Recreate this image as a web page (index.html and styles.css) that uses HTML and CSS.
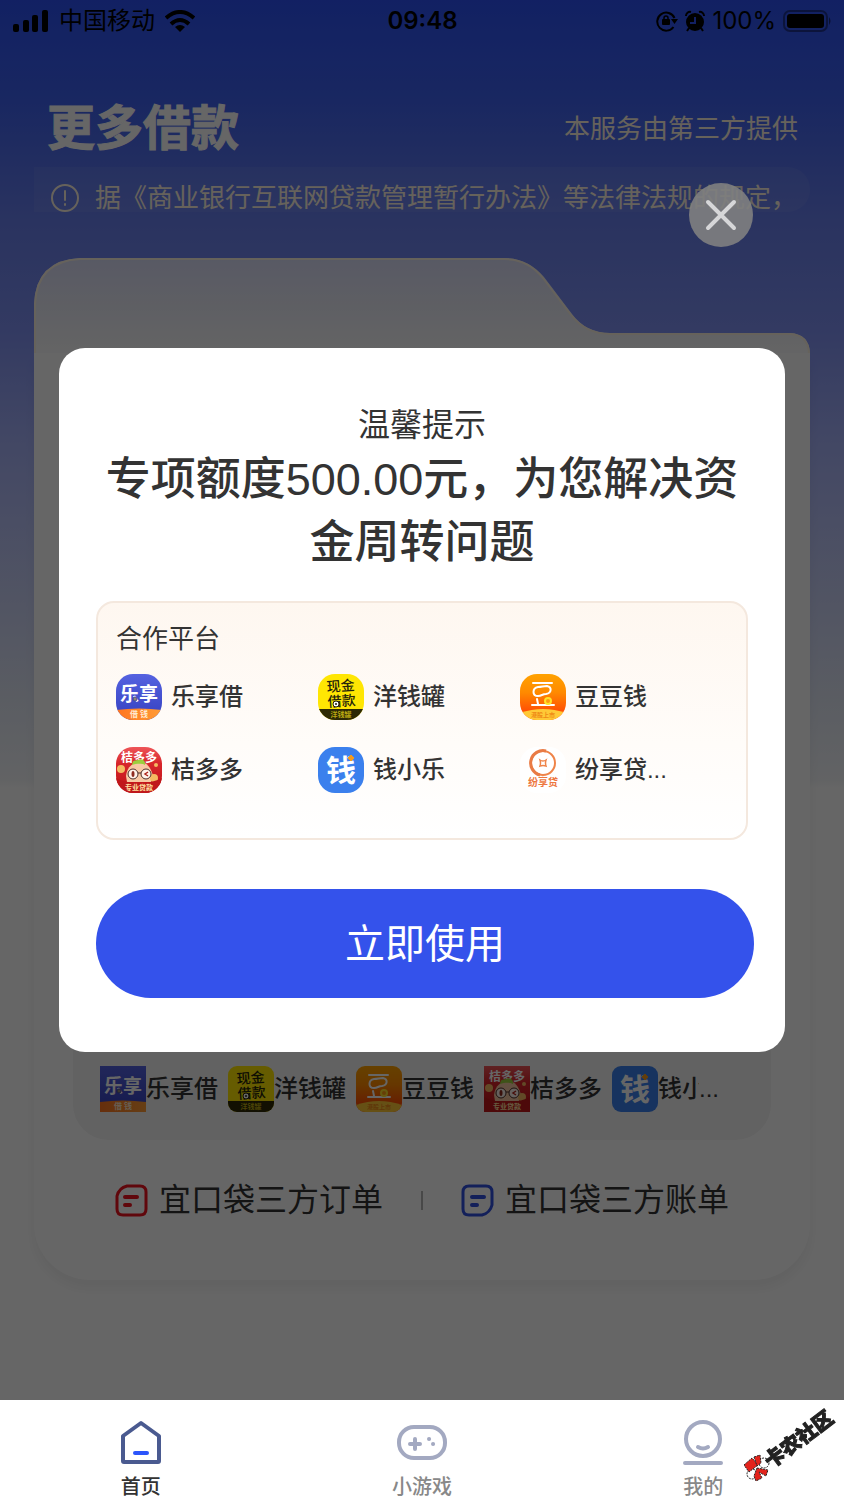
FILE: index.html
```html
<!DOCTYPE html>
<html lang="zh-CN">
<head>
<meta charset="UTF-8" />
<meta name="viewport" content="width=device-width, initial-scale=1" />
<title>更多借款</title>
<link rel="stylesheet" href="styles.css">
</head>
<body>

<div class="page">
  <div class="status-bar">
    <div class="status-left">
      <svg width="36" height="22" viewBox="0 0 36 22">
        <rect x="0" y="14" width="6" height="8" rx="2"/>
        <rect x="10" y="10" width="6" height="12" rx="2"/>
        <rect x="19" y="5" width="6" height="17" rx="2"/>
        <rect x="29" y="0" width="6" height="22" rx="2"/>
      </svg>
      <span>中国移动</span>
      <svg width="30" height="22" viewBox="0 0 30 22">
        <g fill="none" stroke="#000" stroke-width="4">
          <path d="M1 8Q15 -4 29 8"/>
          <path d="M6 14Q15 6 24 14"/>
        </g>
        <path d="M10 17Q15 13 20 17L15 22Z"/>
      </svg>
    </div>
    <strong>09:48</strong>
    <div class="status-right">
      <svg width="22" height="22" viewBox="0 0 22 22">
        <path d="M17.500 17A9 9 0 1 1 18.500 8" fill="none" stroke="#000" stroke-width="2"/>
        <path d="M15 9H22L18.500 14Z"/>
        <rect x="6" y="9" width="8" height="6" rx="1"/>
        <path d="M8 10V8A2 2 0 0 1 12 8V10" fill="none" stroke="#000" stroke-width="1.500"/>
      </svg>
      <svg width="20" height="22" viewBox="0 0 20 22">
        <circle cx="10" cy="12" r="9"/>
        <path d="M1 6A4 4 0 0 1 6 2M14 2A4 4 0 0 1 19 6M4 18L2 21M16 18L18 21" fill="none" stroke="#000" stroke-width="2"/>
        <path d="M10 7V13H5" fill="none" stroke="#2d52f7" stroke-width="2"/>
      </svg>
      <span>100%</span>
      <svg width="49" height="24" viewBox="0 0 49 24">
        <rect x="1" y="2" width="43" height="20" rx="6" fill="none" stroke="#000" stroke-opacity="0.4" stroke-width="2"/>
        <rect x="4" y="5" width="37" height="14" rx="3"/>
        <path d="M46 8Q49 12 46 16Z" fill-opacity="0.5"/>
      </svg>
    </div>
  </div>

  <header>
    <h1>更多借款</h1>
    <span>本服务由第三方提供</span>
  </header>

  <div class="notice">
    <svg width="28" height="28" viewBox="0 0 28 28" fill="none" stroke="#fff5e4" stroke-width="2" stroke-linecap="round">
      <circle cx="14" cy="14" r="13"/>
      <path d="M14 7V16M14 20V21"/>
    </svg>
    <span>据《商业银行互联网贷款管理暂行办法》等法律法规的规定，</span>
  </div>

  <main class="card">
    <svg class="card-top" viewBox="0 0 776 95" preserveAspectRatio="none">
      <defs>
        <linearGradient id="g-card" x1="0" y1="0" x2="0" y2="1"><stop offset="0" stop-color="#dcdffa"/><stop offset="0.5" stop-color="#ebedf8"/><stop offset="1" stop-color="#fbfbfc"/></linearGradient>
      </defs>
      <path d="M0 95V46Q2 2 46 0H470Q494 0 510 19L538 56Q552 75 576 75H756Q775 76 776 95Z" fill="url(#g-card)"/>
      <path d="M1 95V46Q3 3 46 1H470Q494 1 509 20L537 57Q552 76 576 76H756Q774 77 775 95" fill="none" stroke="#fff5e4" stroke-width="2"/>
    </svg>
    <div class="card-body">
      <div class="panel">
        <div class="mini"><svg class="logo"><use href="#logo-lexiang"/></svg>乐享借</div>
        <div class="mini"><svg class="logo round"><use href="#logo-yangqian"/></svg>洋钱罐</div>
        <div class="mini"><svg class="logo round"><use href="#logo-doudou"/></svg>豆豆钱</div>
        <div class="mini"><svg class="logo"><use href="#logo-jieduo"/></svg>桔多多</div>
        <div class="mini"><svg class="logo round"><use href="#logo-qianxiao"/></svg>钱<span class="cut">小</span>...</div>
      </div>
      <div class="links">
        <a href="#">
          <svg width="33" height="33" viewBox="0 0 33 33" fill="none" stroke="#f0131e" stroke-width="4" stroke-linecap="round">
            <path d="M12 2H25Q31 2 31 8V25Q31 31 25 31H8Q2 31 2 25V12Q4 4 12 2Z" stroke-width="3"/>
            <path d="M10 13H22M10 21H15"/>
          </svg>
          宜口袋三方订单
        </a>
        <i class="divider"></i>
        <a href="#">
          <svg width="33" height="33" viewBox="0 0 33 33" fill="none" stroke="#3150e0" stroke-width="4" stroke-linecap="round">
            <path d="M8 2H25Q31 2 31 8V21Q29 29 21 31H8Q2 31 2 25V8Q2 2 8 2Z" stroke-width="3"/>
            <path d="M11 13H23M11 21H16"/>
          </svg>
          宜口袋三方账单
        </a>
      </div>
    </div>
  </main>
</div>

<div class="mask">
  <div class="dialog" role="dialog" aria-labelledby="dialog-title">
    <button class="close" aria-label="关闭">
      <svg width="32" height="32" viewBox="0 0 32 32" fill="none" stroke="#d6d6d8" stroke-width="4" stroke-linecap="round">
        <path d="M3 3L29 29M29 3L3 29"/>
      </svg>
    </button>
    <p id="dialog-title">温馨提示</p>
    <h2>专项额度500.00元，为您解决资金周转问题</h2>
    <div class="partners">
      <h3>合作平台</h3>
      <!-- the card reuses these logos by id -->
      <ul>
        <li>
          <svg class="logo" viewBox="0 0 46 46">
            <defs>
              <linearGradient id="g-blue" x1="0" y1="0" x2="0" y2="1"><stop offset="0" stop-color="#5562e0"/><stop offset="1" stop-color="#3440c0"/></linearGradient>
              <linearGradient id="g-band" x1="0" y1="0" x2="1" y2="0"><stop offset="0" stop-color="#ff7420"/><stop offset="1" stop-color="#ff9c35"/></linearGradient>
            </defs>
            <g id="logo-lexiang">
              <rect width="46" height="46" fill="url(#g-blue)"/>
              <path d="M0 36Q23 33 46 36V46H0Z" fill="url(#g-band)"/>
              <text class="logo-text" x="23" y="27" font-size="19" fill="#fff">乐享</text>
              <circle cx="19" cy="25" r="2" fill="#8c8878" stroke="#454a98"/>
              <text class="logo-text" x="23" y="43" font-size="8" fill="#ffe9cf">借 钱</text>
            </g>
          </svg>
          乐享借
        </li>
        <li>
          <svg class="logo" viewBox="0 0 46 46">
            <g id="logo-yangqian">
              <rect width="46" height="46" fill="#ffe603"/>
              <rect y="35" width="46" height="11" fill="#2d2905"/>
              <text class="logo-text thin" x="23" y="17" font-size="14" fill="#25230a" transform="rotate(-4 23 17)">现金</text>
              <text class="logo-text thin" x="24" y="32" font-size="14" fill="#25230a" transform="rotate(-4 24 32)">借款</text>
              <circle cx="18" cy="30" r="3" fill="#fff" stroke="#25230a"/>
              <circle cx="18" cy="30" r="1" fill="#25230a"/>
              <text class="logo-text" x="23" y="43" font-size="7" fill="#b9a811">洋钱罐</text>
            </g>
          </svg>
          洋钱罐
        </li>
        <li>
          <svg class="logo" viewBox="0 0 46 46">
            <defs>
              <linearGradient id="g-orange" x1="0" y1="0" x2="0" y2="1"><stop offset="0" stop-color="#ffa200"/><stop offset="0.4" stop-color="#ff8a00"/><stop offset="0.85" stop-color="#ff4a05"/></linearGradient>
            </defs>
            <g id="logo-doudou">
              <rect width="46" height="46" fill="url(#g-orange)"/>
              <path d="M0 39Q23 31 46 39V46H0Z" fill="#ffc936"/>
              <g fill="none" stroke="#fff" stroke-width="2" stroke-linecap="round" stroke-linejoin="round">
                <path d="M13 9H32M12 31H34M17 25L18 30"/>
                <path d="M18 13C12 14 12 22 18 22C22 22 22 20 26 20C32 19 32 13 27 12C23 12 22 13 18 13Z"/>
              </g>
              <circle cx="28" cy="27" r="3" fill="#ff9b10" stroke="#ffe229" stroke-width="2"/>
              <text class="logo-text" x="23" y="43" font-size="6" fill="#ef8b16">港股上市</text>
            </g>
          </svg>
          豆豆钱
        </li>
        <li>
          <svg class="logo" viewBox="0 0 46 46">
            <defs>
              <linearGradient id="g-red" x1="0" y1="0" x2="0" y2="1"><stop offset="0" stop-color="#ee5558"/><stop offset="0.35" stop-color="#d8262b"/><stop offset="1" stop-color="#bd1217"/></linearGradient>
            </defs>
            <g id="logo-jieduo">
              <rect width="46" height="46" fill="url(#g-red)"/>
              <text class="logo-text" x="23" y="15" font-size="12" fill="#fff">桔多多</text>
              <path d="M10 29C11 20 17 15 24 15C31 15 35 21 37 29L35 35H11Z" fill="#f8c9a4"/>
              <path d="M16 18C17 12 20 14 22 13C25 11 30 13 29 18C25 16 20 17 16 18Z" fill="#9bcf3d"/>
              <circle cx="5" cy="22" r="4" fill="#f4ba62"/>
              <circle cx="38" cy="31" r="4" fill="#f4ba62"/>
              <circle cx="40" cy="18" r="2" fill="#f4ba62"/>
              <path d="M0 31Q9 36 23 36Q37 36 46 31V46H0Z" fill="#c0171b"/>
              <g fill="#fff3ea" stroke="#4c2d28">
                <circle cx="17" cy="27" r="5"/>
                <circle cx="30" cy="27" r="5"/>
                <path d="M22 26H25"/>
              </g>
              <ellipse cx="17" cy="27" rx="1.500" ry="3" fill="#8e2c20"/>
              <path d="M32 25L29 27L32 29" fill="none" stroke="#b0261c" stroke-width="1.500"/>
              <text class="logo-text" x="23" y="43" font-size="7" fill="#ffe0a0">专业贷款</text>
            </g>
          </svg>
          桔多多
        </li>
        <li>
          <svg class="logo" viewBox="0 0 46 46">
            <g id="logo-qianxiao">
              <rect width="46" height="46" fill="#3b80ed"/>
              <text class="logo-text" x="23" y="34" font-size="30" fill="#fff">钱</text>
              <path d="M33 8L36 11L33 14L30 11Z" fill="#f49a1c" stroke="#f49a1c" stroke-linejoin="round"/>
            </g>
          </svg>
          钱小乐
        </li>
        <li>
          <svg class="logo" viewBox="0 0 46 46">
            <rect width="46" height="46" fill="#fff"/>
            <circle cx="23" cy="16" r="12" fill="none" stroke="#ef8449" stroke-width="2"/>
            <path d="M26 4A12 12 0 1 0 20 28" fill="none" stroke="#e97b45" stroke-width="3"/>
            <path d="M20 13Q23 15 26 13Q25 16 26 19Q23 18 20 19Q21 16 20 13Z" fill="none" stroke="#ef8449" stroke-width="1.500"/>
            <text class="logo-text" x="23" y="39" font-size="10" fill="#ee7841">纷享贷</text>
          </svg>
          纷享贷...
        </li>
      </ul>
    </div>
    <button class="use-btn">立即使用</button>
  </div>
</div>

<nav class="tab-bar">
  <a href="#" class="active">
    <svg width="50" height="50" viewBox="0 0 50 50" fill="none" stroke="#4a5a90" stroke-width="4" stroke-linecap="round" stroke-linejoin="round">
      <path d="M25 5L43 18V43Q43 44 42 44H8Q7 44 7 43V18Z"/>
      <path d="M19 35H31" stroke="#2c55fb"/>
    </svg>
    首页
  </a>
  <a href="#">
    <svg width="50" height="50" viewBox="0 0 50 50" fill="none" stroke="#a3a9c1" stroke-width="4" stroke-linecap="round">
      <rect x="2" y="9" width="46" height="31" rx="15"/>
      <path d="M13 26H23M18 21V31"/>
      <path d="M32 21H32.100M36 26H36.100"/>
    </svg>
    小游戏
  </a>
  <a href="#">
    <svg width="50" height="50" viewBox="0 0 50 50" fill="none" stroke="#a3a9c1" stroke-width="4" stroke-linecap="round">
      <circle cx="25" cy="21" r="17"/>
      <path d="M20 29Q25 32 30 29M7 45H43"/>
    </svg>
    我的
  </a>
</nav>

<svg class="watermark" width="100" height="90" viewBox="0 0 100 90">
  <g stroke="#222" stroke-dasharray="2 1">
    <circle cx="20" cy="62" r="5" fill="#fff"/>
    <circle cx="8" cy="73" r="5" fill="#fff"/>
    <path d="M0 64L8 57L14 64L5 71Z" fill="#e3231b"/>
    <path d="M10 56L16 54L17 62L13 65Z" fill="#e3231b"/>
    <path d="M13 67L24 69L22 75L15 71L18 77L12 80L10 75Z" fill="#e3231b"/>
  </g>
  <text x="27" y="68" font-size="20" stroke="#222" transform="rotate(-37 27 68)">卡农社区</text>
</svg>

</body>
</html>
```

FILE: styles.css
```css
* {
  box-sizing: border-box;
}
body {
  margin: 0;
  font-family: "Liberation Sans", "Noto Sans CJK SC", sans-serif;
  color: #333;
  background: #fff;
}
a {
  color: inherit;
  text-decoration: none;
}
svg {
  display: block;
  flex: none;
}
h1, h2, h3, p, ul {
  margin: 0;
  padding: 0;
  font-weight: 400;
}
.logo {
  width: 46px;
  height: 46px;
}
.logo-text {
  font-family: "Noto Sans CJK SC", sans-serif;
  font-weight: 700;
  text-anchor: middle;
}
.logo-text.thin {
  font-weight: 500;
}

.page {
  min-height: 100vh;
  padding-bottom: 220px;
  background: linear-gradient(180deg, #2d52f7 0, #3f62f2 100px, #6980ef 220px, #8092f4 330px, #a6b2fa 440px, #cbd3f8 600px, #e2e8f6 700px, #f5f7fa 780px, #fff 788px);
}

/* Status bar */
.status-bar {
  display: grid;
  grid-template-columns: 1fr auto 1fr;
  align-items: center;
  height: 42px;
  padding: 0 12px 0 13px;
  color: #000;
  font-family: Inter, "Noto Sans CJK SC", sans-serif;
  font-size: 24px;
  line-height: 40px;
}
.status-bar strong {
  font-weight: 600;
}
.status-left, .status-right {
  display: flex;
  align-items: center;
  gap: 10px;
}
.status-right {
  justify-content: flex-end;
  gap: 7px;
}

header {
  display: flex;
  justify-content: space-between;
  align-items: center;
  padding: 50px 46px 0 47px;
  color: #fff;
  font-size: 26px;
  line-height: 74px;
}
header h1 {
  font-size: 48px;
  font-weight: 700;
  -webkit-text-stroke: 1px #fff;
}
header span {
  color: #fff5e4;
}

.notice {
  display: flex;
  align-items: center;
  gap: 16px;
  height: 45px;
  margin: 1px 34px 0;
  padding: 17px 0 0 17px;
  border-radius: 0 22px 22px 0;
  background: rgba(255, 255, 255, 0.06);
  color: #fff5e4;
  font-size: 26px;
  line-height: 28px;
  white-space: nowrap;
}

/* Folder shaped card */
.card {
  margin: 46px 34px 0;
}
.card-top {
  width: 100%;
  height: 95px;
}
.card-body {
  display: flex;
  flex-direction: column;
  justify-content: flex-end;
  min-height: 927px;
  padding: 0 39px 56px;
  border-radius: 0 0 56px 56px;
  background: #fff;
  box-shadow: 0 8px 12px rgba(0, 0, 0, 0.05);
}
.panel {
  display: flex;
  gap: 10px;
  padding: 160px 27px 28px;
  border-radius: 36px;
  background: #f4f4f4;
  color: #333;
  font-size: 24px;
  font-weight: 500;
  line-height: 46px;
  white-space: nowrap;
}
.mini {
  display: flex;
}
.mini .round {
  border-radius: 9px;
}
.cut {
  width: 17px;
  overflow: clip;
}
.links {
  display: flex;
  justify-content: center;
  align-items: center;
  gap: 38px;
  margin-top: 36px;
  font-size: 32px;
  line-height: 48px;
}
.links a {
  display: flex;
  align-items: center;
  gap: 11px;
}
.divider {
  width: 2px;
  height: 19px;
  background: #b4b4b4;
}

/* Dialog */
.mask {
  position: fixed;
  inset: 0 0 100px;
  display: flex;
  justify-content: center;
  align-items: center;
  background: rgba(0, 0, 0, 0.6);
}
.dialog {
  position: relative;
  width: 86%;
  padding: 54px 37px;
  border-radius: 26px;
  background: #fff;
  text-align: center;
}
.close {
  position: absolute;
  top: -165px;
  right: 32px;
  display: flex;
  justify-content: center;
  align-items: center;
  width: 64px;
  height: 64px;
  padding: 0;
  border: none;
  border-radius: 50%;
  background: rgba(128, 128, 128, 0.9);
  cursor: pointer;
}
.dialog p {
  font-size: 32px;
  line-height: 46px;
}
.dialog h2 {
  font-size: 45px;
  font-weight: 500;
  line-height: 63px;
}
.partners {
  margin-top: 27px;
  padding: 17px 24px 45px 18px;
  border: 2px solid #f4e8de;
  border-radius: 18px;
  background: linear-gradient(180deg, #fef7f0, #fffcf9 60%, #fff);
  text-align: left;
}
.partners h3 {
  font-size: 26px;
  line-height: 38px;
}
.partners ul {
  display: grid;
  grid-template-columns: repeat(3, 1fr);
  row-gap: 27px;
  margin-top: 16px;
  list-style: none;
}
.partners li {
  display: flex;
  gap: 9px;
  font-size: 24px;
  font-weight: 500;
  line-height: 46px;
}
.partners .logo {
  border-radius: 17px;
}
.use-btn {
  width: calc(100% + 6px);
  height: 109px;
  margin: 49px -6px 0 0;
  padding: 0 0 6px;
  border: none;
  border-radius: 55px;
  background: #3452eb;
  color: #fff;
  font-family: inherit;
  font-size: 40px;
  cursor: pointer;
}

/* Bottom tabs */
.tab-bar {
  position: fixed;
  left: 0;
  right: 0;
  bottom: 0;
  display: grid;
  grid-template-columns: repeat(3, 1fr);
  height: 100px;
  padding-top: 18px;
  background: #fff;
  color: #888;
  font-size: 20px;
  font-weight: 500;
  line-height: 26px;
}
.tab-bar a {
  display: flex;
  flex-direction: column;
  align-items: center;
  gap: 6px;
}
.tab-bar .active {
  color: #333;
}
.watermark {
  position: fixed;
  right: 0;
  bottom: 9px;
  font-family: "Noto Sans CJK SC", sans-serif;
  font-weight: 900;
  fill: #222;
}
```
